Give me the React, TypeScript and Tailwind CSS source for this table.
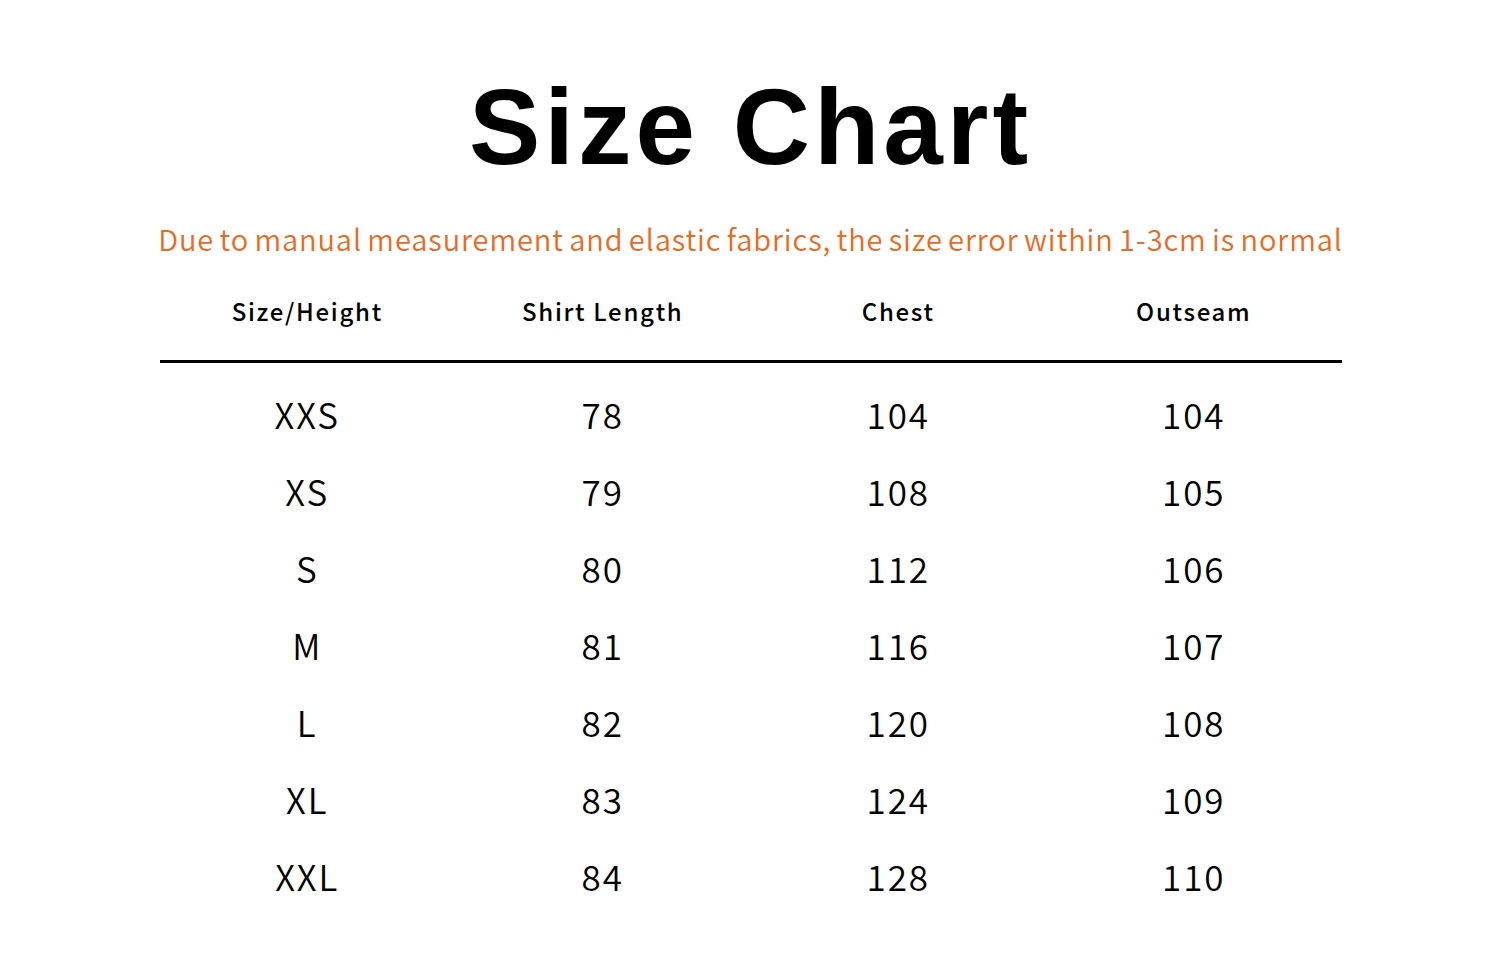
const rows = [
  { size: 'XXS', length: 78, chest: 104, outseam: 104 },
  { size: 'XS', length: 79, chest: 108, outseam: 105 },
  { size: 'S', length: 80, chest: 112, outseam: 106 },
  { size: 'M', length: 81, chest: 116, outseam: 107 },
  { size: 'L', length: 82, chest: 120, outseam: 108 },
  { size: 'XL', length: 83, chest: 124, outseam: 109 },
  { size: 'XXL', length: 84, chest: 128, outseam: 110 },
]

const headers = ['Size/Height', 'Shirt Length', 'Chest', 'Outseam']

export default function App() {
  return (
    <div className="w-[1501px] h-[978px] bg-white overflow-hidden">
      <div className="w-[1182px] mx-auto flex flex-col items-center">
        <h1 className="mt-[72px] h-[110px] leading-[110px] text-[107px] font-bold tracking-[4px] text-black font-['Liberation_Sans',Arial,sans-serif]">
          Size Chart
        </h1>
        <p className="mt-[38px] text-[29px] leading-[36px] text-[#ea6a1f] font-[350] tracking-[0.9px] [word-spacing:-2px] whitespace-nowrap font-['Noto_Sans_CJK_SC','Noto_Sans',sans-serif]">
          Due to manual measurement and elastic fabrics, the size error within 1-3cm is normal
        </p>

        <div className="w-full mt-[28px] font-['Noto_Sans_CJK_SC','Noto_Sans',sans-serif]">
          <div className="grid grid-cols-4 h-[54px] items-center border-b-[3px] border-black pb-[22px] box-content">
            {headers.map((h) => (
              <div key={h} className="text-center text-[24px] font-medium tracking-[1.7px] text-black">
                {h}
              </div>
            ))}
          </div>
          <div className="pt-[13px]">
            {rows.map((r) => (
              <div key={r.size} className="grid grid-cols-4 h-[77px] items-center text-[35px] font-[350] tracking-[2px] text-black">
                <div className="text-center">{r.size}</div>
                <div className="text-center">{r.length}</div>
                <div className="text-center">{r.chest}</div>
                <div className="text-center">{r.outseam}</div>
              </div>
            ))}
          </div>
        </div>
      </div>
    </div>
  )
}
